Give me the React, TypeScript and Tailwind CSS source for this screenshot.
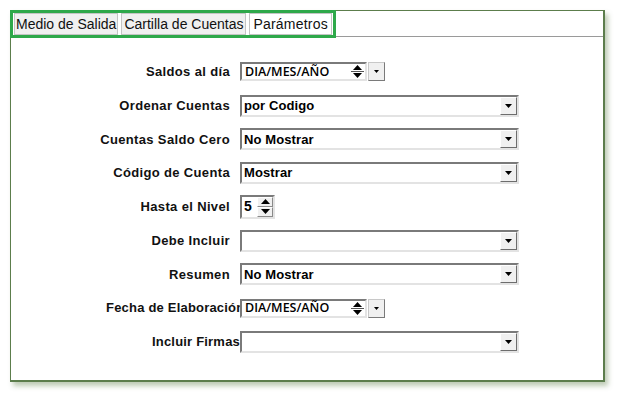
import React from 'react';

const Arrow = () => (
  <svg width="7" height="4" viewBox="0 0 7 4">
    <path d="M0 0h7L3.5 4z" fill="#000" />
  </svg>
);

const DropBtn = () => (
  <div className="w-[17px] h-full flex items-center justify-center bg-[#f0f0f0] border border-t-[#fff] border-l-[#fff] border-r-[#6d6d6d] border-b-[#6d6d6d]">
    <Arrow />
  </div>
);

const Select = ({ value }: { value: string }) => (
  <div className="w-[279px] h-[22px] flex items-stretch bg-white border-2 border-t-[#7a7a7a] border-l-[#7a7a7a] border-r-[#e3e3e3] border-b-[#e3e3e3]">
    <div className="flex-1 flex items-center pl-[2px] text-[13px] tracking-[0.1px] font-bold text-black">{value}</div>
    <DropBtn />
  </div>
);

const UpDown = () => (
  <div className="w-[16px] h-full flex flex-col justify-center items-center gap-[1px]">
    <svg width="9" height="5" viewBox="0 0 9 5">
      <path d="M0 5h9L4.5 0z" fill="#000" />
    </svg>
    <div className="w-[13px] h-px bg-[#555]" />
    <svg width="9" height="5" viewBox="0 0 9 5">
      <path d="M0 0h9L4.5 5z" fill="#000" />
    </svg>
  </div>
);

const DateBox = () => (
  <div className="flex items-stretch h-[19px] gap-[1px]">
    <div className="w-[127px] flex items-stretch bg-white border-2 border-t-[#7a7a7a] border-l-[#7a7a7a] border-r-[#e3e3e3] border-b-[#e3e3e3]">
      <div className="flex-1 flex items-center pl-[3px] text-[12.5px] font-semibold text-black font-['Open_Sans']">DIA/MES/AÑO</div>
      <UpDown />
    </div>
    <div className="w-[17px] flex items-center justify-center bg-[#f0f0f0] border border-[#c8c8c8] border-r-[#7a7a7a] border-b-[#7a7a7a]">
      <svg width="5" height="3" viewBox="0 0 5 3">
        <path d="M0 0h5L2.5 3z" fill="#000" />
      </svg>
    </div>
  </div>
);

const Spinner = () => (
  <div className="w-[35px] h-[24px] flex items-stretch bg-white border-2 border-t-[#7a7a7a] border-l-[#7a7a7a] border-r-[#e3e3e3] border-b-[#e3e3e3]">
    <div className="flex-1 flex items-center pl-[2px] text-[14px] font-bold text-black">5</div>
    <div className="w-[16px] flex flex-col">
      <div className="flex-1 flex items-center justify-center bg-[#f0f0f0] border border-t-white border-l-white border-r-[#8a8a8a] border-b-[#8a8a8a]">
        <svg width="9" height="5" viewBox="0 0 9 5">
          <path d="M0 5h9L4.5 0z" fill="#000" />
        </svg>
      </div>
      <div className="flex-1 flex items-center justify-center bg-[#f0f0f0] border border-t-white border-l-white border-r-[#8a8a8a] border-b-[#8a8a8a]">
        <svg width="9" height="5" viewBox="0 0 9 5">
          <path d="M0 0h9L4.5 5z" fill="#000" />
        </svg>
      </div>
    </div>
  </div>
);

const Row = ({ label, children, tight }: { label: string; children: React.ReactNode; tight?: boolean }) => (
  <div className="h-[33.75px] flex items-center">
    {tight ? (
      <div className="ml-[95px] w-[134px] overflow-hidden whitespace-nowrap text-right text-[13px] tracking-[0.2px] font-bold text-[#111]">
        {label}
      </div>
    ) : (
      <div className="w-[219px] mr-[10px] whitespace-nowrap text-right text-[13px] tracking-[0.35px] font-bold text-[#111]">{label}</div>
    )}
    {children}
  </div>
);

export default function App() {
  return (
    <div className="w-[617px] h-[397px] bg-white pt-[10px] pl-[10px] font-['Liberation_Sans',Arial,sans-serif]">
      <div className="w-[595px] h-[372px] bg-white border border-[#5c7d4c] border-b-2 border-r-2 shadow-[3px_4px_5px_rgba(110,140,90,0.45)]">
        <div className="h-[26px] flex items-start border-b border-[#9a9a9a]">
          <div className="-ml-px -mt-px h-[28px] flex items-stretch gap-[3px] border-[3px] border-[#2ea84a] px-px bg-white">
            <div className="px-[1px] flex items-center bg-[#f0f0f0] border border-[#c4c4c4] text-[14px] text-[#111]">Medio de Salida</div>
            <div className="px-[2px] flex items-center bg-[#f0f0f0] border border-[#c4c4c4] text-[14px] text-[#111]">Cartilla de Cuentas</div>
            <div className="px-[3px] flex items-center bg-white border border-[#c4c4c4] text-[14px] tracking-[0.2px] text-[#111]">Parámetros</div>
          </div>
        </div>
        <div className="pt-[18px]">
          <Row label="Saldos al día"><DateBox /></Row>
          <Row label="Ordenar Cuentas"><Select value="por Codigo" /></Row>
          <Row label="Cuentas Saldo Cero"><Select value="No Mostrar" /></Row>
          <Row label="Código de Cuenta"><Select value="Mostrar" /></Row>
          <Row label="Hasta el Nivel"><Spinner /></Row>
          <Row label="Debe Incluir"><Select value="" /></Row>
          <Row label="Resumen"><Select value="No Mostrar" /></Row>
          <Row label="Fecha de Elaboración" tight><DateBox /></Row>
          <Row label="Incluir Firmas" tight><Select value="" /></Row>
        </div>
      </div>
    </div>
  );
}
